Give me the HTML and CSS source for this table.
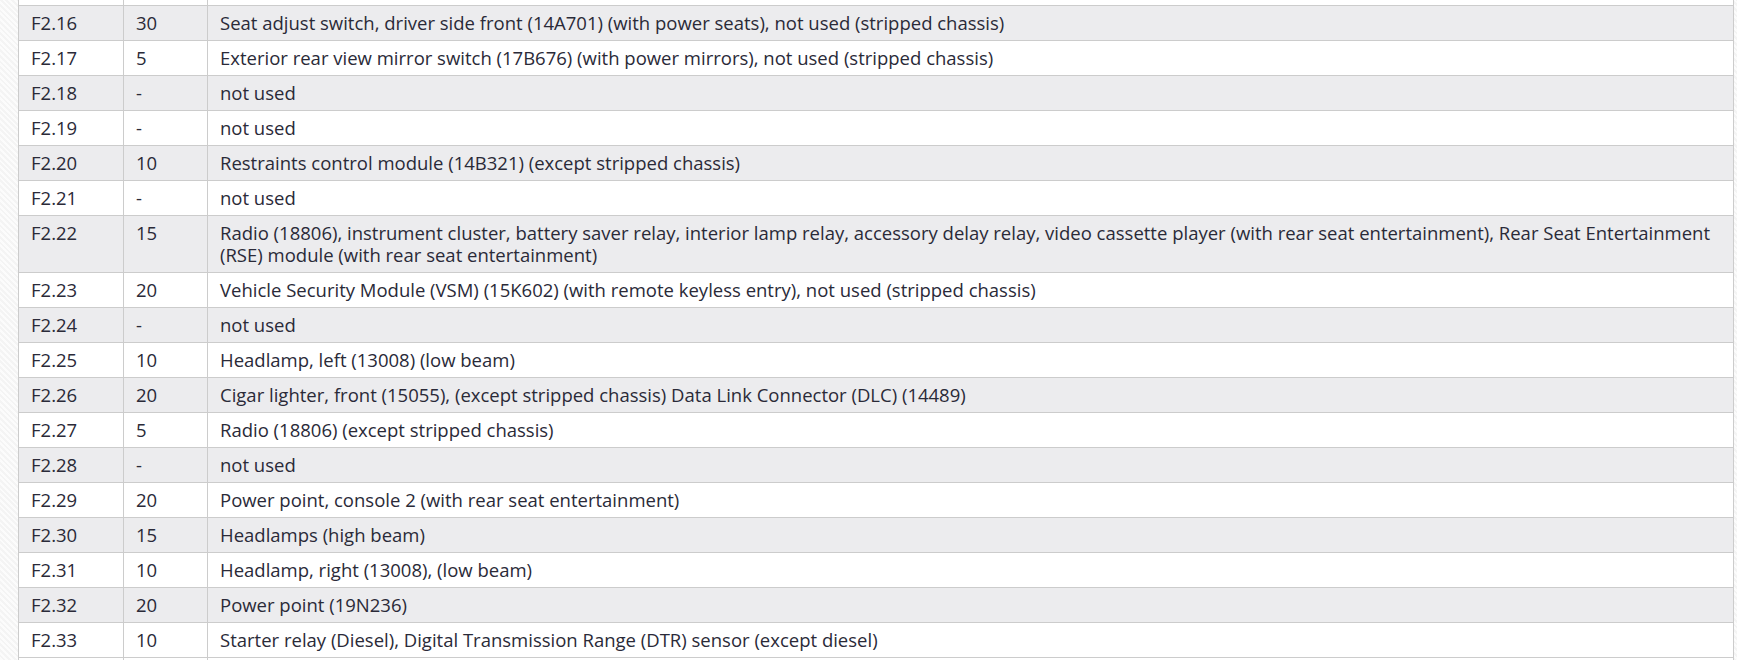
FILE: index.html
```html
<!DOCTYPE html>
<html lang="en">
<head>
<meta charset="utf-8">
<title>Fuse table</title>
<link rel="stylesheet" href="styles.css">
</head>
<body>
<div class="page">
<table class="fuses">
<colgroup><col class="c-fuse"><col class="c-amp"><col class="c-desc"></colgroup>
<tbody>
<tr class="stub"><td></td><td></td><td></td></tr>
<tr class="alt"><td>F2.16</td><td>30</td><td>Seat adjust switch, driver side front (14A701) (with power seats), not used (stripped chassis)</td></tr>
<tr><td>F2.17</td><td>5</td><td>Exterior rear view mirror switch (17B676) (with power mirrors), not used (stripped chassis)</td></tr>
<tr class="alt"><td>F2.18</td><td>-</td><td>not used</td></tr>
<tr><td>F2.19</td><td>-</td><td>not used</td></tr>
<tr class="alt"><td>F2.20</td><td>10</td><td>Restraints control module (14B321) (except stripped chassis)</td></tr>
<tr><td>F2.21</td><td>-</td><td>not used</td></tr>
<tr class="alt"><td>F2.22</td><td>15</td><td>Radio (18806), instrument cluster, battery saver relay, interior lamp relay, accessory delay relay, video cassette player (with rear seat entertainment), Rear Seat Entertainment (RSE) module (with rear seat entertainment)</td></tr>
<tr><td>F2.23</td><td>20</td><td>Vehicle Security Module (VSM) (15K602) (with remote keyless entry), not used (stripped chassis)</td></tr>
<tr class="alt"><td>F2.24</td><td>-</td><td>not used</td></tr>
<tr><td>F2.25</td><td>10</td><td>Headlamp, left (13008) (low beam)</td></tr>
<tr class="alt"><td>F2.26</td><td>20</td><td>Cigar lighter, front (15055), (except stripped chassis) Data Link Connector (DLC) (14489)</td></tr>
<tr><td>F2.27</td><td>5</td><td>Radio (18806) (except stripped chassis)</td></tr>
<tr class="alt"><td>F2.28</td><td>-</td><td>not used</td></tr>
<tr><td>F2.29</td><td>20</td><td>Power point, console 2 (with rear seat entertainment)</td></tr>
<tr class="alt"><td>F2.30</td><td>15</td><td>Headlamps (high beam)</td></tr>
<tr><td>F2.31</td><td>10</td><td>Headlamp, right (13008), (low beam)</td></tr>
<tr class="alt"><td>F2.32</td><td>20</td><td>Power point (19N236)</td></tr>
<tr><td>F2.33</td><td>10</td><td>Starter relay (Diesel), Digital Transmission Range (DTR) sensor (except diesel)</td></tr>
<tr><td></td><td></td><td></td></tr>
</tbody>
</table>
</div>
</body>
</html>
```

FILE: styles.css
```css
html, body {
  margin: 0;
  padding: 0;
}
body {
  background-color: #f4f4f4;
  background-image: repeating-linear-gradient(45deg, rgba(255,255,255,0.7) 0 2px, transparent 2px 4px);
  font-family: "Open Sans", "Noto Sans", sans-serif;
  overflow: hidden;
}
.page {
  padding-left: 18px;
  width: 1716px;
}
.fuses {
  width: 1716px;
  border-collapse: collapse;
  table-layout: fixed;
  background: #ffffff;
  font-size: 18.5px;
  line-height: 22px;
  color: #2a2a38;
}
.c-fuse { width: 105px; }
.c-amp { width: 84px; }
.fuses td {
  border: 1px solid #cccccc;
  padding: 6px 12px 6px 12px;
  vertical-align: top;
  text-align: left;
}
.fuses tr.alt td {
  background: #ececee;
}
.fuses tr.stub td {
  border-top: none;
  padding: 0;
  height: 5px;
}
```
